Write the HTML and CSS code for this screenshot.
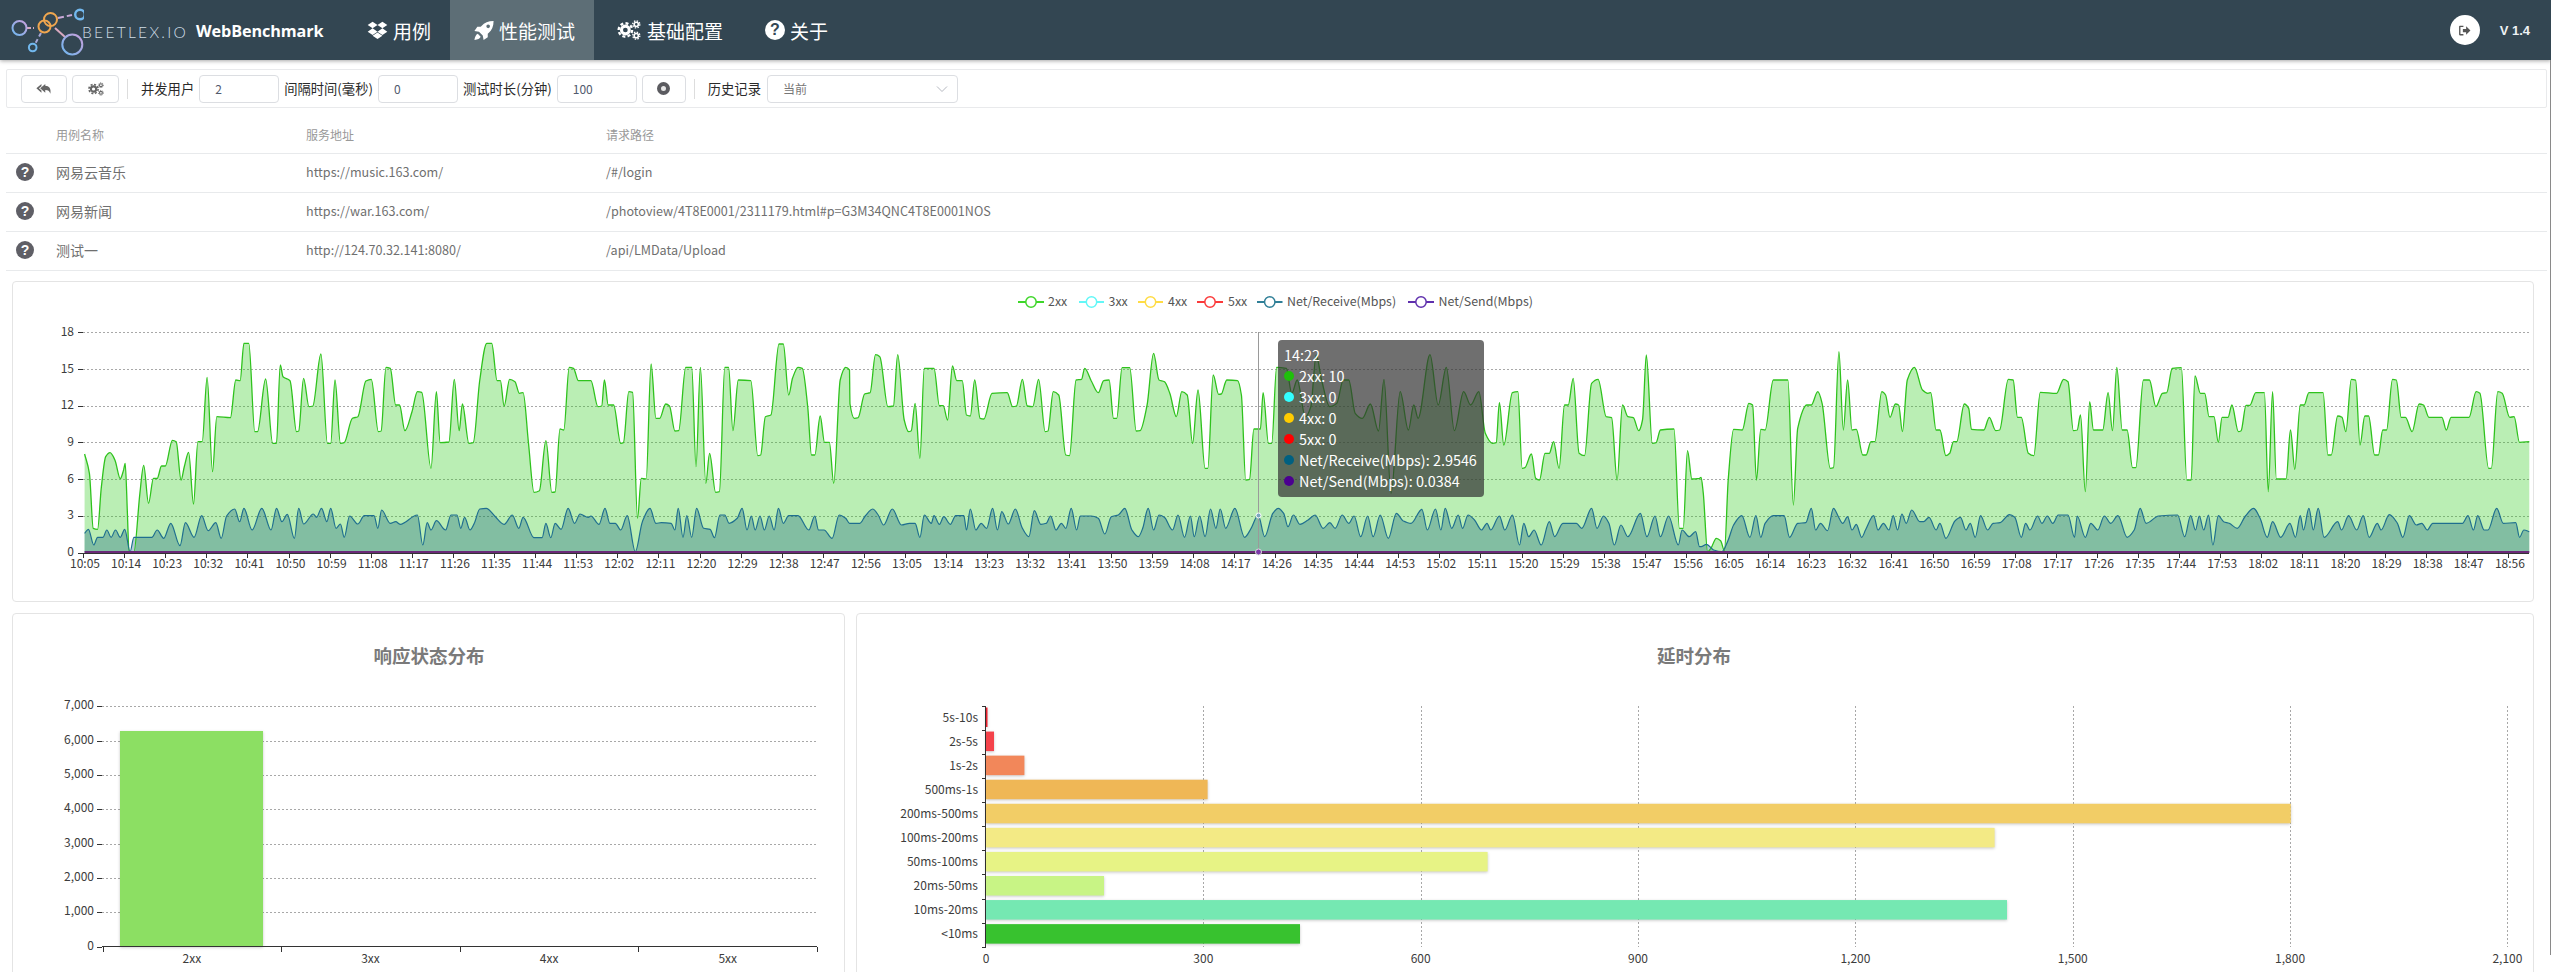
FILE: index.html
```html
<!DOCTYPE html>
<html lang="zh">
<head>
<meta charset="utf-8">
<title>WebBenchmark</title>
<link rel="stylesheet" href="styles.css">
</head>
<body>
<svg class="defs" width="0" height="0" aria-hidden="true">
  <defs>
    <symbol id="i-dropbox" viewBox="0 0 24 22">
      <path d="M6 1l6 4-6 4-6-4zM18 1l6 4-6 4-6-4zM0 13l6-4 6 4-6 4zM18 9l6 4-6 4-6-4zM6 18l6-4 6 4-6 4z"/>
    </symbol>
    <symbol id="i-rocket" viewBox="0 0 24 24">
      <path fill-rule="evenodd" d="M23.5.5c-6.500 0-11 2-14.500 6L8 7.500H4l-3.500 5 5.500 1 4.500 4.500 1 5.500 5-3.500v-4l1-1c4-3.500 6-8 6-14.500zM17 4.800a2.200 2.200 0 1 1 0 4.400 2.200 2.200 0 0 1 0-4.400z"/>
      <path d="M4.500 16c-2 1-3.500 3.500-4 7.500 4-.5 6.500-2 7.500-4z"/>
    </symbol>
    <symbol id="i-cogs" viewBox="0 0 26 22">
      <g fill="none" stroke="currentColor">
        <circle cx="9" cy="11" r="4.300" stroke-width="3.400"/>
        <circle cx="9" cy="11" r="7.400" stroke-width="2.600" stroke-dasharray="3.300 2.500"/>
        <circle cx="21" cy="4.800" r="2.300" stroke-width="1.800"/>
        <circle cx="21" cy="4.800" r="3.900" stroke-width="1.500" stroke-dasharray="1.600 1.460"/>
        <circle cx="21" cy="17.200" r="2.300" stroke-width="1.800"/>
        <circle cx="21" cy="17.200" r="3.900" stroke-width="1.500" stroke-dasharray="1.600 1.460"/>
      </g>
    </symbol>
    <symbol id="i-reply" viewBox="0 0 24 22">
      <path d="M8 3L0 10l8 7v-3.500L4 10l4-3.500z"/>
      <path d="M14 3L6 10l8 7v-4.500c4.500 0 6.500 1.500 8 6 1.500-8-2-12.500-8-12.500z"/>
    </symbol>
    <symbol id="i-logout" viewBox="0 0 24 24">
      <path d="M10 3H3.500A1.500 1.500 0 0 0 2 4.500v15A1.500 1.500 0 0 0 3.500 21H10v-2.500H4.500v-13H10z"/>
      <path d="M9 9h6V4l8 8-8 8v-5H9z"/>
    </symbol>
    <linearGradient id="g-ring" x1="1" y1="0" x2="0" y2="1">
      <stop offset="0" stop-color="#c9a0dc"/><stop offset="1" stop-color="#6fb7ef"/>
    </linearGradient>
  </defs>
</svg>

<header class="navbar">
  <div class="brand">
    <svg class="logo" width="84" height="60" viewBox="0 0 84 60">
      <g fill="none" stroke="#d5a8c0" stroke-width="2">
        <path d="M27 28h7" stroke-dasharray="4 2"/>
        <path d="M58 18l14-3" stroke-dasharray="6 3" stroke="#c9a8d8"/>
        <path d="M55 28l10 9" stroke="#d8a8c0"/>
        <path d="M41 33l-6 11" stroke-dasharray="4 3" stroke="#a8a8d8"/>
      </g>
      <g fill="none" stroke-width="2">
        <circle cx="19.500" cy="28" r="7" stroke="url(#g-ring)"/>
        <circle cx="50.500" cy="19.500" r="6.500" stroke="#efa64f"/>
        <circle cx="44.500" cy="26.500" r="6" stroke="#efa64f"/>
        <circle cx="80" cy="14.500" r="4.800" stroke="#72b8ee" stroke-width="2.400"/>
        <circle cx="32.700" cy="47.500" r="3.800" stroke="#72b8ee"/>
        <circle cx="72.300" cy="44.500" r="10" stroke="url(#g-ring)"/>
      </g>
    </svg>
    <span class="brand-mark">BEETLEX.IO</span>
    <span class="brand-name">WebBenchmark</span>
  </div>
  <nav class="nav">
    <a class="nav-item nav-first"><svg class="nav-icon nav-icon-box"><use href="#i-dropbox"/></svg>用例</a>
    <a class="nav-item nav-active"><svg class="nav-icon nav-icon-rocket"><use href="#i-rocket"/></svg>性能测试</a>
    <a class="nav-item nav-third"><svg class="nav-icon nav-icon-cogs"><use href="#i-cogs"/></svg>基础配置</a>
    <a class="nav-item nav-fourth"><span class="help help-nav">?</span>关于</a>
  </nav>
  <div class="nav-right">
    <span class="logout"><svg class="logout-icon"><use href="#i-logout"/></svg></span>
    <span class="version">V 1.4</span>
  </div>
</header>

<section class="toolbar">
  <button class="btn btn-a"><svg class="btn-icon"><use href="#i-reply"/></svg></button>
  <button class="btn btn-b"><svg class="btn-icon"><use href="#i-cogs"/></svg></button>
  <span class="divider"></span>
  <label class="field-label">并发用户</label>
  <input class="field" value="2">
  <label class="field-label">间隔时间(毫秒)</label>
  <input class="field" value="0">
  <label class="field-label">测试时长(分钟)</label>
  <input class="field" value="100">
  <button class="btn btn-c"><span class="stop"></span></button>
  <span class="divider"></span>
  <label class="field-label">历史记录</label>
  <div class="select"><span>当前</span><svg class="chev" width="12" height="8" viewBox="0 0 12 8"><path d="M1 1.500l5 5 5-5" fill="none" stroke="#b5b8c0" stroke-width="1"/></svg></div>
</section>

<table class="cases">
  <thead>
    <tr><th class="c-icon"></th><th class="c-name">用例名称</th><th class="c-host">服务地址</th><th>请求路径</th></tr>
  </thead>
  <tbody>
    <tr><td class="c-icon"><span class="help help-row">?</span></td><td class="cn">网易云音乐</td><td>https://music.163.com/</td><td>/#/login</td></tr>
    <tr><td class="c-icon"><span class="help help-row">?</span></td><td class="cn">网易新闻</td><td>https://war.163.com/</td><td>/photoview/4T8E0001/2311179.html#p=G3M34QNC4T8E0001NOS</td></tr>
    <tr><td class="c-icon"><span class="help help-row">?</span></td><td class="cn">测试一</td><td>http://124.70.32.141:8080/</td><td>/api/LMData/Upload</td></tr>
  </tbody>
</table>

<section class="panel panel-main">
  <svg id="timeline" class="chart" viewBox="13 282 2520 319" width="2520" height="319"></svg>
  <div class="tooltip">
    <div class="tip-title">14:22</div>
    <div class="tip-row"><i class="dot dot-2xx"></i>2xx: 10</div>
    <div class="tip-row"><i class="dot dot-3xx"></i>3xx: 0</div>
    <div class="tip-row"><i class="dot dot-4xx"></i>4xx: 0</div>
    <div class="tip-row"><i class="dot dot-5xx"></i>5xx: 0</div>
    <div class="tip-row"><i class="dot dot-recv"></i>Net/Receive(Mbps): 2.9546</div>
    <div class="tip-row"><i class="dot dot-send"></i>Net/Send(Mbps): 0.0384</div>
  </div>
</section>

<div class="bottom">
  <section class="panel panel-status">
    <svg id="status" class="chart" viewBox="13 614 831 358" width="831" height="358"></svg>
  </section>
  <section class="panel panel-latency">
    <svg id="latency" class="chart" viewBox="858 614 1675 358" width="1675" height="358"></svg>
  </section>
</div>
<div class="edge-line"></div>
<script src="charts.js"></script>
</body>
</html>
```
FILE: styles.css
```css
* { box-sizing: border-box; }
html, body { margin: 0; height: 972px; overflow: hidden; background: #fff; }
body { font-family: "Noto Sans CJK SC", "Noto Sans", sans-serif; color: #515a6e; position: relative; }
.defs { position: absolute; }

.navbar { height: 60px; background: #334652; color: #fff; display: flex; align-items: stretch; box-shadow: 0 1px 4px rgba(0,0,0,.35); position: relative; }
.brand { display: flex; align-items: center; width: 367px; }
.logo { flex: none; margin-right: -2px; }
.brand-mark { font-family: Lato, sans-serif; font-weight: 300; font-size: 15.500px; letter-spacing: 2.300px; color: #cfdde6; width: 114px; margin-top: 3px; white-space: nowrap; }
.brand-name { font-family: "Open Sans", sans-serif; font-weight: 700; font-size: 16.200px; color: #fff; margin-top: 2px; letter-spacing: -.1px; }
.nav { display: flex; align-items: stretch; }
.nav-item { display: flex; align-items: center; font-size: 19px; color: #fff; white-space: nowrap; }
.nav-first { width: 83px; }
.nav-active { width: 144px; padding-left: 24px; background: #5d6e76; }
.nav-third { width: 135px; padding-left: 23px; }
.nav-fourth { padding-left: 36px; }
.nav-icon { fill: #fff; color: #fff; margin-right: 5px; flex: none; }
.nav-icon-box { width: 21px; height: 18px; }
.nav-icon-rocket { width: 20px; height: 21px; }
.nav-icon-cogs { width: 24px; height: 20px; margin-right: 6px; }
.nav-right { margin-left: auto; display: flex; align-items: center; padding-right: 21px; }
.logout { width: 30px; height: 30px; border-radius: 50%; background: #fff; display: flex; align-items: center; justify-content: center; margin-right: 20px; }
.logout-icon { width: 13px; height: 13px; fill: #555; }
.version { font-family: "Liberation Sans", sans-serif; font-weight: 700; font-size: 13px; color: #eef2f4; }

.help { display: inline-flex; align-items: center; justify-content: center; border-radius: 50%; font-family: "Liberation Sans", sans-serif; font-weight: 700; }
.help-nav { width: 20px; height: 20px; background: #fff; color: #334652; font-size: 16px; margin-right: 5px; }
.help-row { width: 18px; height: 18px; background: #5f5f66; color: #fff; font-size: 14px; }

.toolbar { height: 39px; margin: 9px 4px 0 6px; border: 1px solid #e9eaec; border-radius: 2px; display: flex; align-items: center; gap: 5px; padding-left: 14px; font-size: 13.300px; color: #2a2a2a; }
.btn { height: 28px; width: 46px; background: #fff; border: 1px solid #dcdee2; border-radius: 4px; padding: 0; display: flex; align-items: center; justify-content: center; }
.btn-b { width: 47px; }
.btn-c { width: 44px; }
.btn-icon { width: 16px; height: 14px; fill: #666; color: #666; }
.stop { width: 13px; height: 13px; border-radius: 50%; border: 4px solid #5b5b60; background: #e8e8e8; }
.divider { width: 1px; height: 20px; background: #ddd; margin: 0 8px 0 3px; }
.field-label { white-space: nowrap; }
.field { width: 80px; height: 28px; border: 1px solid #dcdee2; border-radius: 4px; padding: 0 15px; font: 12px "Noto Sans CJK SC", sans-serif; color: #515a6e; outline: none; }
.select { width: 191px; height: 28px; border: 1px solid #dcdee2; border-radius: 4px; padding: 0 9px 0 15px; font-size: 12px; color: #777; display: flex; align-items: center; justify-content: space-between; margin-left: 1px; }

.cases { border-collapse: separate; border-spacing: 0; table-layout: fixed; width: 2541px; margin: 7px 0 0 6px; font-size: 12.600px; color: #6f6f6f; }
.cases th { height: 39px; font-weight: 400; font-size: 12px; color: #999; text-align: left; padding: 0; border-bottom: 1px solid #e8eaec; }
.cases td { height: 39px; padding: 0 0 3px; border-bottom: 1px solid #e8eaec; }
.cases td.cn { font-size: 14px; }
.c-icon { width: 50px; padding-left: 10px !important; }
.c-name { width: 250px; }
.c-host { width: 300px; }

.panel { border: 1px solid #e4e4e4; border-radius: 4px; background: #fff; position: relative; overflow: hidden; }
.panel-main { width: 2522px; height: 321px; margin: 10px 0 0 12px; }
.bottom { display: flex; gap: 11px; margin: 11px 0 0 12px; width: 2522px; }
.panel-status { width: 833px; height: 400px; }
.panel-latency { width: 1678px; height: 400px; }
.chart { display: block; }
.edge-line { position: absolute; left: 2550px; top: 60px; width: 1px; height: 895px; background: #8a8a8a; }

.tooltip { position: absolute; left: 1265px; top: 58px; width: 206px; height: 157px; padding: 4px 6px; background: rgba(50,50,50,.7); border-radius: 4px; color: #fff; font-size: 14.400px; line-height: 21px; white-space: nowrap; }
.tip-title { height: 21px; }
.tip-row { display: flex; align-items: center; height: 21px; }
.dot { width: 10px; height: 10px; border-radius: 50%; margin-right: 5px; flex: none; }
.dot-2xx { background: #1fc00a; }
.dot-3xx { background: #3ff; }
.dot-4xx { background: #fc0; }
.dot-5xx { background: #f00; }
.dot-recv { background: #006080; }
.dot-send { background: #4b0090; }

.t { font-size: 12px; fill: #3c3c3c; }
.t-mid { text-anchor: middle; }
.t-end { text-anchor: end; }
.t-legend { font-size: 12.400px; fill: #555; }
.t-title { font-size: 18.500px; font-weight: 700; fill: #7a7a7a; text-anchor: middle; }
.grid { stroke: #a8a8a8; stroke-width: 1; stroke-dasharray: 2 2; fill: none; shape-rendering: crispEdges; }
.axis { stroke: #333; stroke-width: 1; fill: none; shape-rendering: crispEdges; }
.area-2xx { fill: #2ecc1a; fill-opacity: .33; }
.line-2xx { fill: none; stroke: #2fc21d; stroke-width: 1.300; }
.area-recv { fill: #00507b; fill-opacity: .3; }
.line-recv { fill: none; stroke: #1f6f8f; stroke-width: 1.200; }
.line-base { stroke: #6a2a78; stroke-width: 1.800; }
.cross { stroke: #9a9a9a; stroke-width: 1; shape-rendering: crispEdges; }
.bar { filter: drop-shadow(0 1px 1.500px rgba(0,0,0,.22)); }
```
FILE: charts.js
```js
var NS = 'http://www.w3.org/2000/svg';

function el(parent, name, attrs, text) {
  var n = document.createElementNS(NS, name);
  for (var k in attrs) n.setAttribute(k, attrs[k]);
  if (text !== undefined) n.textContent = text;
  parent.appendChild(n);
  return n;
}

function parse(str, off, sx) {
  return str.trim().split(/\s+/).map(function (p) {
    var a = p.split(',');
    return [off + a[0] * sx, 280 + a[1] / 3];
  });
}

function joined(parts) {
  var s = [];
  [[0, 850 / 1568], [850, 850 / 1568], [1700, 851 / 1568]].forEach(function (z, i) {
    parse(parts[i], z[0], z[1]).forEach(function (p) {
      if (!s.length || p[0] > s[s.length - 1][0]) s.push(p);
    });
  });
  return s;
}

function smooth(p) {
  var n = p.length, d = [], m = [], i;
  for (i = 0; i < n - 1; i++) d[i] = (p[i + 1][1] - p[i][1]) / (p[i + 1][0] - p[i][0]);
  m[0] = d[0];
  m[n - 1] = d[n - 2];
  for (i = 1; i < n - 1; i++) m[i] = d[i - 1] * d[i] <= 0 ? 0 : 2 * d[i - 1] * d[i] / (d[i - 1] + d[i]);
  var path = 'M' + p[0][0].toFixed(1) + ' ' + p[0][1].toFixed(1);
  for (i = 0; i < n - 1; i++) {
    var h = (p[i + 1][0] - p[i][0]) / 3;
    path += 'C' + (p[i][0] + h).toFixed(1) + ' ' + (p[i][1] + m[i] * h).toFixed(1) + ' ' +
      (p[i + 1][0] - h).toFixed(1) + ' ' + (p[i + 1][1] - m[i + 1] * h).toFixed(1) + ' ' +
      p[i + 1][0].toFixed(1) + ' ' + p[i + 1][1].toFixed(1);
  }
  return path;
}

var GREEN = [
'156,522 165,580 172,745 180,748 187,620 195,530 203,518 212,540 222,596 228,570 231,550 235,700 238,815 247,815 258,640 265,556 274,670 283,595 290,595 298,558 305,558 318,481 325,485 334,600 340,560 348,517 357,672 365,485 373,485 382,292 392,575 400,410 425,413 435,300 443,302 450,190 459,190 470,455 475,455 490,297 503,490 510,490 517,255 522,290 535,302 547,455 551,453 560,295 570,380 577,378 592,222 604,490 610,490 618,300 628,490 635,488 650,415 660,410 675,303 685,298 698,455 703,453 712,262 720,265 730,375 737,375 747,452 760,395 770,335 778,337 795,565 805,335 812,488 828,486 838,298 847,452 853,372 865,490 873,488 885,300 898,190 907,190 917,302 923,302 930,378 940,298 950,305 958,340 965,338 975,490 985,637 995,632 1007,482 1018,637 1024,636 1033,447 1040,450 1050,262 1058,265 1067,302 1090,302 1103,380 1110,378 1115,300 1122,375 1132,375 1145,490 1150,488 1160,335 1167,337 1176,715 1183,595 1192,597 1201,252 1210,415 1217,415 1228,372 1235,378 1245,453 1252,452 1265,262 1276,262 1284,560 1292,262 1302,610 1309,520 1320,637 1327,635 1337,262 1344,262 1352,452 1362,300 1385,302 1398,527 1403,525 1412,410 1422,405 1437,192 1445,192 1455,345 1462,295 1472,262 1480,265 1490,380 1497,525 1503,525 1513,408 1521,487 1530,487 1538,610 1550,300 1560,262 1567,270',
'0,372 8,415 15,413 27,342 37,338 47,224 55,230 70,380 80,378 88,224 100,420 108,455 113,452 120,370 129,535 137,265 155,265 165,377 172,377 180,420 189,258 197,302 207,302 215,405 222,408 230,300 240,415 247,417 262,340 290,338 300,380 307,378 318,298 327,378 337,380 348,298 360,455 365,453 375,335 385,345 398,525 405,527 417,300 427,298 433,265 445,302 458,338 468,302 478,300 486,415 492,415 502,263 516,263 528,453 535,452 548,375 560,220 570,300 580,305 590,340 602,410 612,335 622,345 632,490 642,330 655,565 660,565 670,285 680,343 685,342 695,300 715,302 722,345 730,600 737,598 745,447 757,447 762,338 772,490 778,490 787,262 805,265 815,340 825,300 840,410 850,380 860,225 870,300 885,380 898,370 910,300 920,300 932,400 945,415 960,372 975,453 985,298 998,640 1015,335 1030,450 1040,375 1048,415 1070,224 1085,375 1100,262 1115,452 1132,335 1145,375 1160,335 1172,460 1185,490 1192,488 1198,368 1206,495 1222,338 1232,335 1240,565 1245,563 1257,522 1265,595 1272,600 1282,520 1290,520 1298,485 1308,565 1318,375 1325,375 1334,295 1345,520 1355,527 1368,310 1380,298 1395,410 1405,413 1415,600 1425,375 1435,410 1445,413 1455,452 1462,420 1469,225 1480,490 1487,488 1495,450 1520,447 1530,745 1537,745 1545,512 1553,597 1567,595',
'2,592 6,640 14,815 20,805 30,775 38,782 45,812 52,600 62,448 78,450 90,370 97,375 104,600 112,448 120,450 135,300 162,300 172,675 180,445 197,375 205,375 217,335 225,370 240,565 246,563 256,215 264,450 272,300 280,450 288,448 300,525 306,525 315,485 322,485 335,335 342,345 350,412 360,372 366,375 373,455 382,300 395,262 410,330 420,340 425,338 435,450 442,450 453,527 460,520 467,485 473,485 487,372 495,385 500,448 523,450 533,412 545,452 552,450 568,298 577,300 585,412 592,412 605,520 615,527 627,337 657,340 670,298 678,305 688,452 695,450 701,405 710,635 718,365 725,450 742,450 752,338 760,452 768,262 778,450 787,450 797,563 803,563 817,300 828,300 840,380 852,340 860,338 870,265 887,263 897,600 905,600 912,288 922,340 930,340 938,410 947,410 955,487 962,412 973,412 980,375 992,455 997,452 1006,376 1013,376 1024,338 1040,338 1047,635 1055,335 1062,597 1080,597 1088,450 1096,568 1106,375 1113,375 1122,338 1148,338 1157,525 1163,525 1175,408 1183,412 1190,455 1200,298 1208,300 1216,495 1225,408 1232,408 1243,525 1250,525 1258,450 1265,450 1276,298 1283,300 1292,412 1300,412 1312,455 1325,372 1333,375 1343,412 1367,412 1375,450 1384,412 1417,412 1430,335 1437,340 1453,565 1458,565 1470,335 1478,340 1492,412 1500,410 1510,487 1528,485'
];

var BLUE = [
'156,760 163,748 173,795 180,772 190,772 197,750 205,772 213,750 222,772 230,748 240,815 247,772 280,772 290,750 302,775 315,730 332,797 342,728 358,772 372,707 384,752 398,728 408,775 418,708 433,687 442,725 450,685 465,750 483,685 500,750 510,685 520,725 530,703 543,775 551,685 560,732 578,702 584,712 593,685 603,725 610,685 620,745 628,732 635,772 645,708 660,732 672,707 690,707 697,745 704,690 720,730 730,725 738,733 770,705 780,795 788,728 795,750 805,722 822,750 832,705 843,705 850,745 857,712 867,750 875,730 885,687 897,685 912,707 930,733 945,705 957,745 965,712 985,773 1000,773 1007,730 1016,773 1024,730 1035,748 1048,685 1060,730 1070,702 1085,712 1090,708 1105,733 1116,685 1125,730 1135,730 1145,750 1157,707 1172,815 1185,725 1199,685 1210,730 1220,728 1238,730 1245,750 1251,685 1260,772 1267,707 1276,772 1285,685 1298,745 1310,748 1318,773 1328,705 1337,705 1345,730 1360,715 1369,685 1378,750 1386,708 1393,750 1402,708 1410,750 1419,708 1428,750 1436,685 1445,730 1455,707 1472,707 1492,750 1503,708 1510,750 1520,750 1535,775 1548,705 1560,715 1567,730',
'0,730 18,730 28,708 42,687 52,705 62,735 78,687 95,735 110,730 120,730 129,772 137,705 150,730 155,707 165,733 173,710 185,733 195,707 210,707 215,750 222,687 232,750 242,730 252,745 263,685 272,750 280,695 292,732 305,687 318,745 330,770 340,692 352,733 362,730 370,708 380,750 390,730 398,745 408,685 418,750 425,708 445,708 458,715 470,762 482,710 495,705 507,685 520,750 532,770 540,745 550,685 560,750 570,705 580,712 595,750 605,705 617,772 628,708 635,770 645,708 655,770 665,687 675,745 683,687 693,745 710,685 728,772 740,745 753,705 765,770 780,700 790,685 800,700 808,740 818,705 830,733 845,720 858,705 873,745 885,728 895,745 908,705 920,730 930,708 942,770 955,708 965,770 978,705 993,775 1008,700 1020,722 1035,730 1055,688 1065,750 1080,687 1090,750 1098,685 1110,745 1122,705 1130,745 1140,705 1152,720 1165,750 1175,730 1182,750 1198,708 1208,750 1222,705 1235,795 1243,730 1252,770 1262,750 1275,795 1290,725 1300,770 1315,730 1340,730 1350,745 1368,685 1378,745 1390,708 1400,730 1410,795 1422,735 1435,770 1458,700 1470,770 1485,708 1495,770 1510,708 1528,795 1535,750 1548,770 1560,755 1567,800',
'2,800 12,793 25,810 40,815 52,780 62,735 77,707 92,772 103,707 112,772 120,730 135,707 155,707 165,772 180,730 195,728 205,685 213,750 222,730 235,752 246,685 255,710 263,730 272,710 280,750 288,733 298,772 305,750 320,707 328,750 338,730 348,750 356,707 364,750 372,702 380,730 390,690 405,725 412,725 422,712 435,750 442,730 453,775 470,722 480,712 490,750 498,730 507,772 517,707 530,750 540,730 553,728 570,704 580,712 592,772 600,730 608,750 622,708 630,730 640,708 650,730 660,705 678,705 690,772 695,708 710,772 720,730 733,750 745,708 757,730 770,707 787,772 800,750 811,685 822,730 845,708 880,705 893,770 904,707 913,750 920,708 928,750 937,705 945,795 955,707 965,725 975,730 990,745 1005,708 1020,685 1032,715 1045,772 1055,725 1070,772 1087,730 1097,772 1106,707 1112,750 1122,685 1130,750 1139,685 1150,772 1175,725 1182,750 1195,707 1210,750 1222,707 1233,772 1248,730 1255,750 1270,704 1285,730 1295,772 1307,707 1320,735 1330,730 1340,750 1350,730 1372,730 1385,730 1405,730 1415,707 1425,750 1433,707 1445,750 1452,750 1468,685 1480,730 1503,728 1510,772 1518,750 1528,755'
];

function fmt(n) { return n.toString().replace(/\B(?=(\d{3})+$)/, ','); }

function drawTimeline() {
  var svg = document.getElementById('timeline');
  var base = 552.5;
  var green = joined(GREEN), blue = joined(BLUE);
  var x0 = green[0][0], x1 = green[green.length - 1][0];

  [18, 15, 12, 9, 6, 3].forEach(function (v) {
    var y = Math.round(base - v * 220.2 / 18) + 0.5;
    el(svg, 'line', { 'class': 'grid', x1: 83, x2: 2529, y1: y, y2: y });
  });

  function area(p, cls) {
    el(svg, 'path', { 'class': cls, d: smooth(p) + 'L' + p[p.length - 1][0] + ' ' + base + 'L' + p[0][0] + ' ' + base + 'Z' });
  }
  area(green, 'area-2xx');
  area(blue, 'area-recv');
  el(svg, 'path', { 'class': 'line-2xx', d: smooth(green) });
  el(svg, 'path', { 'class': 'line-recv', d: smooth(blue) });
  el(svg, 'line', { 'class': 'line-base', x1: x0, x2: x1, y1: base - .5, y2: base - .5 });

  el(svg, 'line', { 'class': 'axis', x1: 83, x2: 2529, y1: 553.5, y2: 553.5 });
  for (var v = 0; v <= 18; v += 3) {
    var y = base - v * 220.2 / 18;
    el(svg, 'line', { 'class': 'axis', x1: 78, x2: 83, y1: Math.round(y) + .5, y2: Math.round(y) + .5 });
    el(svg, 'text', { 'class': 't t-end', x: 74, y: y + 3.5 }, v);
  }
  for (var i = 0; i < 60; i++) {
    var x = 83 + i * 41.1;
    var mins = 10 * 60 + 5 + i * 9;
    var mm = mins % 60;
    var label = Math.floor(mins / 60) + ':' + (mm < 10 ? '0' : '') + mm;
    el(svg, 'line', { 'class': 'axis', x1: Math.round(x) + .5, x2: Math.round(x) + .5, y1: 553, y2: 558 });
    el(svg, 'text', { 'class': 't t-mid', x: x + 2, y: 568 }, label);
  }

  el(svg, 'line', { 'class': 'cross', x1: 1258.5, x2: 1258.5, y1: 332, y2: 552 });
  el(svg, 'circle', { cx: 1258.5, cy: 515.5, r: 2.5, fill: '#7ba6c0', stroke: '#fff', 'stroke-width': 1 });
  el(svg, 'circle', { cx: 1258.5, cy: 552, r: 3, fill: '#7a3aa8', stroke: '#ddd', 'stroke-width': 1 });

  var legend = [
    [1018, 1044, 1048, '2xx', '#3ed629'],
    [1079, 1104, 1108.5, '3xx', '#63f7f7'],
    [1138, 1163, 1168, '4xx', '#ffdc45'],
    [1197, 1223, 1228, '5xx', '#fb3a3a'],
    [1257, 1282.5, 1287, 'Net/Receive(Mbps)', '#2f7f97'],
    [1408, 1434, 1438.5, 'Net/Send(Mbps)', '#5f30ad']
  ];
  legend.forEach(function (l) {
    el(svg, 'line', { x1: l[0], x2: l[1], y1: 302, y2: 302, stroke: l[4], 'stroke-width': 2 });
    el(svg, 'circle', { cx: (l[0] + l[1]) / 2, cy: 302, r: 5.2, fill: '#fff', stroke: l[4], 'stroke-width': 1.5 });
    el(svg, 'text', { 'class': 't-legend', x: l[2], y: 306 }, l[3]);
  });
}

function drawStatus() {
  var svg = document.getElementById('status');
  el(svg, 'text', { 'class': 't-title', x: 429, y: 663 }, '响应状态分布');
  for (var v = 0; v <= 7; v++) {
    var y = 946.5 - v * 34.3;
    if (v) el(svg, 'line', { 'class': 'grid', x1: 102, x2: 817, y1: Math.round(y) + .5, y2: Math.round(y) + .5 });
    el(svg, 'line', { 'class': 'axis', x1: 97, x2: 102, y1: Math.round(y) + .5, y2: Math.round(y) + .5 });
    el(svg, 'text', { 'class': 't t-end', x: 94, y: y + 3 }, fmt(v * 1000));
  }
  el(svg, 'rect', { 'class': 'bar', x: 120, y: 731, width: 143, height: 215.5, fill: '#8cdf63' });
  el(svg, 'line', { 'class': 'axis', x1: 102, x2: 817, y1: 946.5, y2: 946.5 });
  ['2xx', '3xx', '4xx', '5xx'].forEach(function (t, i) {
    var x = 102.6 + i * 178.6;
    el(svg, 'line', { 'class': 'axis', x1: Math.round(x) + .5, x2: Math.round(x) + .5, y1: 947, y2: 952 });
    el(svg, 'text', { 'class': 't t-mid', x: x + 89.3, y: 963 }, t);
  });
  el(svg, 'line', { 'class': 'axis', x1: 817.5, x2: 817.5, y1: 947, y2: 952 });
}

function drawLatency() {
  var svg = document.getElementById('latency');
  el(svg, 'text', { 'class': 't-title', x: 1695, y: 663 }, '延时分布');
  for (var i = 0; i <= 7; i++) {
    var x = 987 + i * 217.35;
    if (i) el(svg, 'line', { 'class': 'grid', x1: Math.round(x) + .5, x2: Math.round(x) + .5, y1: 706, y2: 947 });
    el(svg, 'text', { 'class': 't t-mid', x: x, y: 963 }, fmt(i * 300));
  }
  el(svg, 'line', { 'class': 'axis', x1: 986.5, x2: 986.5, y1: 706, y2: 947 });
  for (var j = 0; j <= 10; j++) {
    var ty = Math.round(706 + j * 24.07) + .5;
    el(svg, 'line', { 'class': 'axis', x1: 983, x2: 987, y1: ty, y2: ty });
  }
  var rows = [
    ['5s-10s', 1.5, '#e8212e'],
    ['2s-5s', 8, '#f4424a'],
    ['1s-2s', 38.4, '#f2875a'],
    ['500ms-1s', 221.6, '#efb756'],
    ['200ms-500ms', 1304.8, '#f2cd66'],
    ['100ms-200ms', 1008.6, '#f3ea85'],
    ['50ms-100ms', 501.6, '#e7f385'],
    ['20ms-50ms', 118, '#c8f485'],
    ['10ms-20ms', 1021, '#75e8b2'],
    ['<10ms', 314, '#38c22f']
  ];
  rows.forEach(function (r, i) {
    var top = 706 + i * 24.07;
    el(svg, 'rect', { 'class': 'bar', x: 987, y: top + 1.5, width: r[1], height: 19.5, fill: r[2] });
    el(svg, 'text', { 'class': 't t-end', x: 979, y: top + 15.5 }, r[0]);
  });
}

drawTimeline();
drawStatus();
drawLatency();
```
